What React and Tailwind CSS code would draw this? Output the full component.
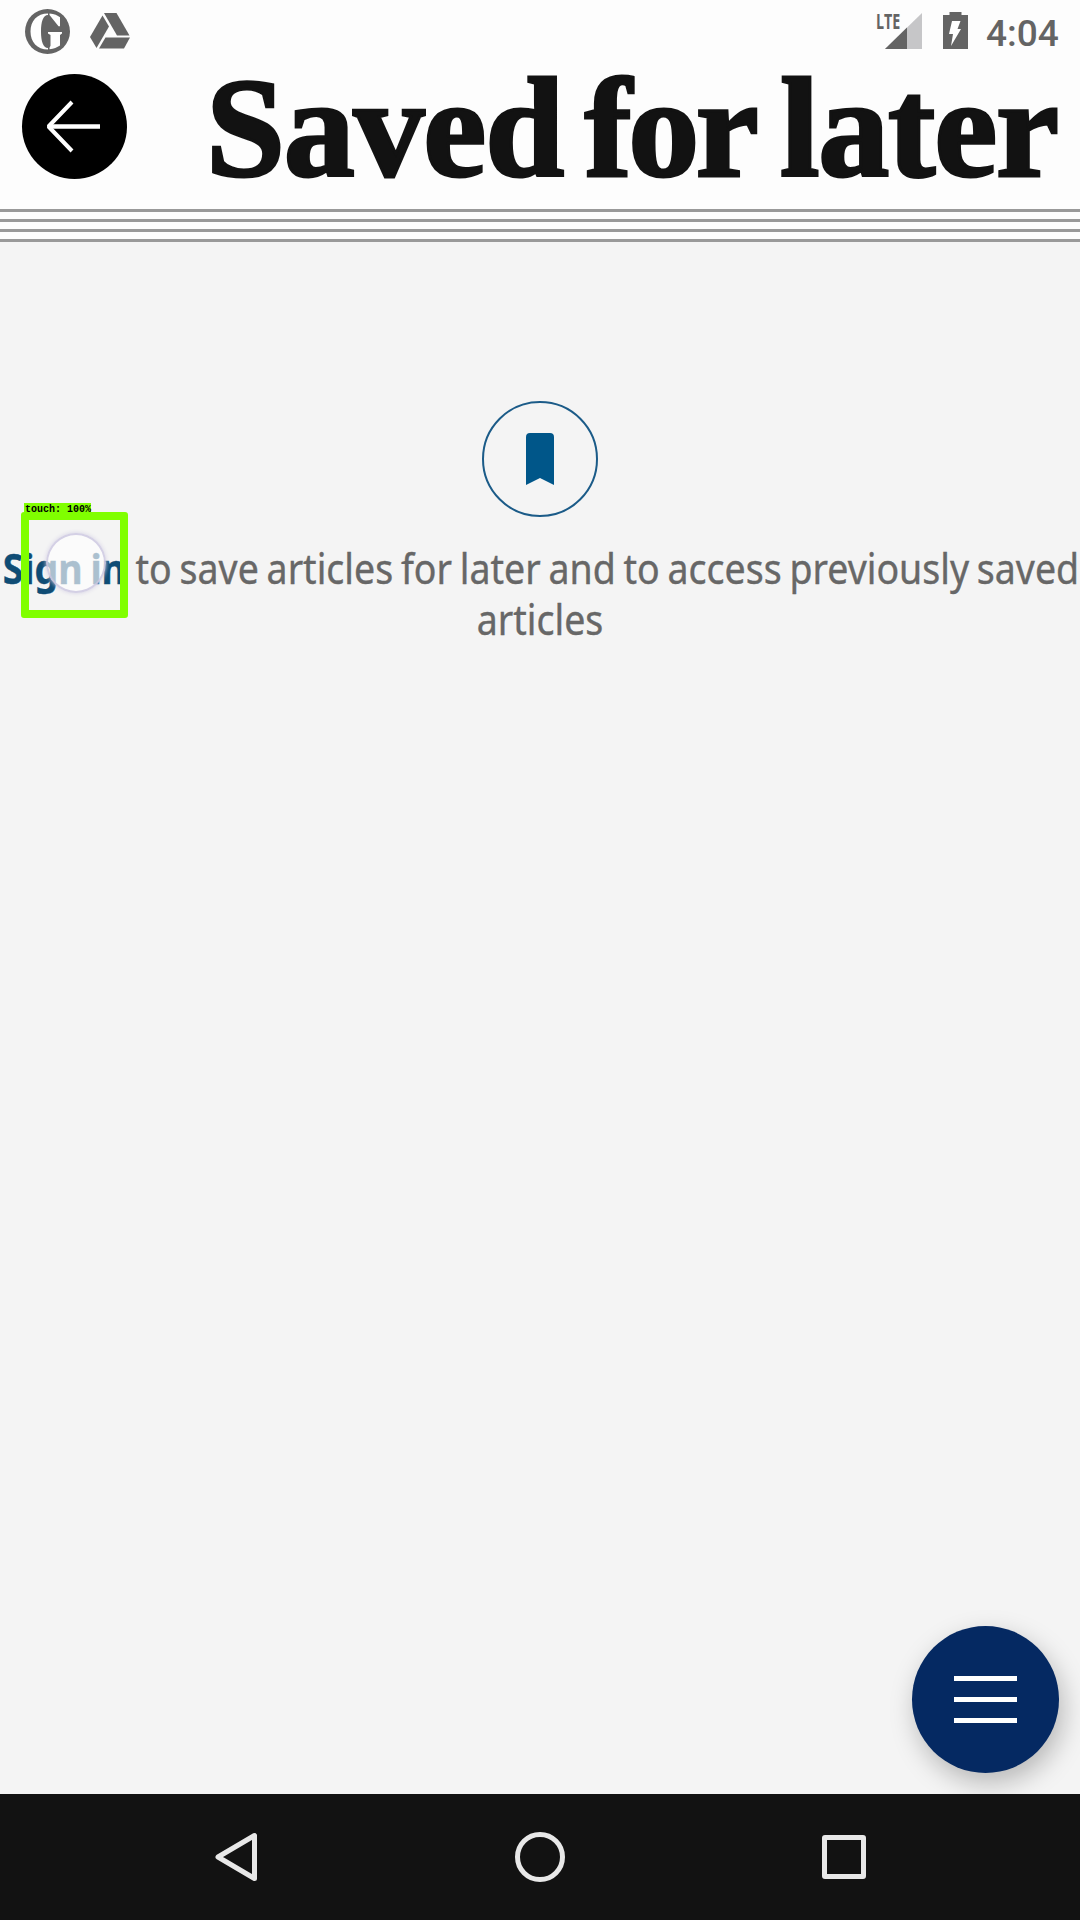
function StatusBar() {
  return (
    <div className="flex h-[63px] items-start justify-between pl-[25px]">
      <div className="flex items-start gap-[20px] pt-[9px]">
        <svg className="h-[45px] w-[45px]" viewBox="0 0 45 45">
          <circle cx="22.5" cy="22.5" r="22.5" fill="#646464" />
          <path d="M23 4.500C12 4.500 5.500 12 5.500 22.500S12 40.500 23 40.500v-1.500c-5 0-7-7-7-16.500s2-16.500 7-16.500Z" fill="#fff" />
          <path d="M24.500 4.500c5 .4 8 2 10.500 3.800v9h-1.500L24.500 6Z" fill="#fff" />
          <path d="M23 23h14v1.500l-2 1.500v10.500c-3 1.800-6 3.400-10.500 3.800v-1.500l1-2V26L23 24.500Z" fill="#fff" />
        </svg>
        <svg className="mt-[4px] h-[36px] w-[41px]" viewBox="0 0 41 36" fill="#646464">
          <path d="M14 0h12.500l13 22.500H27Z" />
          <path d="M12.500 2.500L19 13.500L6.500 35L0 24Z" />
          <path d="M15.500 24.500H40L34 35.500H9Z" />
        </svg>
      </div>
      <div className="flex w-[204px] items-start text-[#646464]">
        <span className="mt-[11px] w-[9px] origin-left scale-x-[0.68] whitespace-nowrap font-['Open_Sans'] text-[21px] leading-[21px] font-bold">LTE</span>
        <svg className="mt-[13px] h-[36px] w-[37px]" viewBox="0 0 37 36">
          <path d="M37 0V36H0Z" fill="#c6c6c8" />
          <path d="M22 14.500V36H0Z" fill="#646464" />
        </svg>
        <svg className="mt-[12px] ml-[21px] h-[37px] w-[25px]" viewBox="0 0 25 37">
          <path d="M6.500 0h12v3H25v34H0V3h6.500Z" fill="#646464" />
          <path d="M9 9h8.500l-3 8H18L8 34l2-12H6Z" fill="#fff" />
        </svg>
        <span className="mt-[15px] ml-[18px] whitespace-nowrap [font-family:Roboto,sans-serif] text-[37px] leading-[38px] font-medium">4:04</span>
      </div>
    </div>
  );
}

function Header() {
  return (
    <header className="flex h-[146px] items-start justify-between pt-[11px] pl-[22px] pr-[22px]">
      <button className="flex size-[105px] items-center justify-center rounded-full bg-black pr-[3px]" aria-label="Back">
        <svg className="h-[54px] w-[54px]" viewBox="0 0 54 54" fill="none" stroke="#fff" strokeWidth="4">
          <path d="M26 2L2.500 26.500L26 51" strokeLinejoin="bevel" />
          <path d="M3 26.500H54" strokeWidth="4.600" />
        </svg>
      </button>
      <h1 className="-mt-[10px] flex w-[848px] justify-between font-['Liberation_Serif'] text-[142px] leading-[128px] font-bold whitespace-nowrap text-[#121212] [-webkit-text-stroke:3px_#121212]">
        <span className="w-[350px] -indent-[4px] tracking-[-1.2px]">Saved</span>
        <span className="w-[171px] tracking-[-3.5px]">for</span>
        <span className="w-[278px] tracking-[-1.2px]">later</span>
      </h1>
    </header>
  );
}

function Rules() {
  return (
    <div className="flex h-[33px] flex-col justify-between">
      <div className="h-[3px] bg-[#999]" />
      <div className="h-[3px] bg-[#999]" />
      <div className="h-[3px] bg-[#999]" />
      <div className="h-[3px] bg-[#999]" />
    </div>
  );
}

function TouchMarker() {
  return (
    <div className="absolute top-[503px] left-[21px] h-[115px] w-[107px]">
      <div className="absolute top-[9px] left-0 h-[106px] w-[107px] rounded-[3px] border-8 border-[#80ff00]" />
      <div className="absolute top-0 left-[3px] h-[13px] w-[67px] bg-[#80ff00] pl-px font-['Liberation_Mono'] text-[10px] leading-[14px] font-bold whitespace-nowrap text-black">touch: 100%</div>
      <div className="absolute top-[30px] left-[25px] size-[60px] rounded-full border-2 border-[#c9c4df]/80 bg-white/65 shadow-[0_0_4px_#d3cfe4]" />
    </div>
  );
}

export default function App() {
  return (
    <div className="relative flex h-[1920px] w-[1080px] flex-col overflow-hidden bg-[#fdfdfd]">
      <StatusBar />
      <Header />
      <Rules />
      <main className="flex flex-1 flex-col items-center bg-[#f4f4f4] pt-[159px]">
        <div className="flex size-[116px] items-center justify-center rounded-full border-2 border-[#1b5b88]">
          <svg className="h-[52px] w-[28px]" viewBox="0 0 28 52">
            <path d="M4 0h20q4 0 4 4v48L14 45L0 52V4q0-4 4-4Z" fill="#005689" />
          </svg>
        </div>
        <p className="mt-[25px] w-[1300px] scale-x-[0.893] text-center font-['Noto_Sans'] text-[42px] leading-[51px] whitespace-nowrap text-[#676767] [word-spacing:-2.2px] [-webkit-text-stroke:0.4px_currentColor]">
          <span className="mr-[2px] ml-[2px] font-bold text-[#0f4c75]">Sign in</span> to save articles for later and to access previously saved
          <br />
          articles
        </p>
      </main>
      <nav className="flex h-[126px] items-center bg-[#121212] pl-[215px]">
        <svg className="h-[50px] w-[43px]" viewBox="0 0 43 50" fill="none" stroke="#e8e8e8" strokeWidth="5" strokeLinejoin="round">
          <path d="M39.500 3.500V46.500L3 25Z" />
        </svg>
        <div className="ml-[257px] size-[50px] rounded-full border-[5px] border-[#e8e8e8]" />
        <div className="ml-[257px] size-[44px] rounded-[3px] border-[5px] border-[#e8e8e8]" />
      </nav>
      <div className="absolute top-[1626px] left-[912px] flex size-[147px] flex-col items-center justify-center gap-[16px] rounded-full bg-[#052962] shadow-[4px_10px_26px_rgba(0,0,0,0.25)] [clip-path:inset(-60px_-60px_-21px_-60px)]">
        <div className="h-[5px] w-[63px] bg-white" />
        <div className="h-[5px] w-[63px] bg-white" />
        <div className="h-[5px] w-[63px] bg-white" />
      </div>
      <TouchMarker />
    </div>
  );
}
